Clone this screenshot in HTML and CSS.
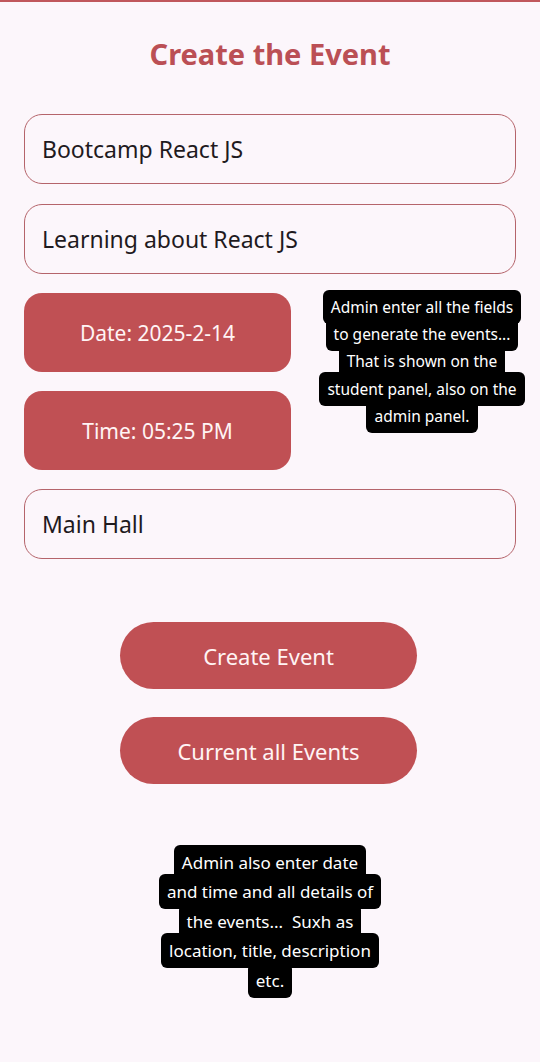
FILE: index.html
```html
<!DOCTYPE html>
<html>
<head>
<meta charset="utf-8">
<link rel="stylesheet" href="styles.css">
</head>
<body>
<div class="page">
  <h1 class="title">Create the Event</h1>
  <div class="field">Bootcamp React JS</div>
  <div class="field">Learning about React JS</div>
  <div class="picker">Date: 2025-2-14</div>
  <div class="picker">Time: 05:25 PM</div>
  <div class="field">Main Hall</div>
  <div class="actions">
    <div class="pill">Create Event</div>
    <div class="pill">Current all Events</div>
  </div>
  <div class="sticker sticker-top"><span>Admin enter all the fields<br>to generate the events...<br>That is shown on the<br>student panel, also on the<br>admin panel.</span></div>
  <div class="sticker sticker-bottom"><span>Admin also enter date<br>and time and all details of<br>the events...&nbsp; Suxh as<br>location, title, description<br>etc.</span></div>
</div>
</body>
</html>
```

FILE: styles.css
```css
* { box-sizing: border-box; }
html, body { margin: 0; padding: 0; }
body {
  background: #fcf6fb;
  font-family: "Noto Sans", "Open Sans", sans-serif;
  width: 540px;
  height: 1062px;
  overflow: hidden;
}
.page {
  position: relative;
  border-top: 2px solid #c0575c;
  padding: 0 24px 0 24px;
  height: 1062px;
}
.title {
  margin: 34px 0 0 0;
  height: 36px;
  line-height: 36px;
  font-size: 29px;
  font-weight: 700;
  color: #bb4f55;
  text-align: center;
}
.field {
  margin-top: 42px;
  height: 70px;
  border: 1.5px solid #b5646b;
  border-radius: 18px;
  display: flex;
  align-items: center;
  padding-left: 17px;
  font-size: 23px;
  color: #1f1a1e;
}
.field + .field { margin-top: 20px; }
.picker {
  margin-top: 19px;
  width: 267px;
  height: 79px;
  border-radius: 18px;
  background: #c05054;
  color: #fff4f4;
  font-size: 21px;
  display: flex;
  align-items: center;
  justify-content: center;
}
.picker + .field { margin-top: 19px; }
.actions {
  margin-top: 63px;
  display: flex;
  flex-direction: column;
  align-items: center;
  gap: 28px;
  padding-right: 3px;
}
.pill {
  width: 297px;
  height: 67px;
  border-radius: 34px;
  background: #c05054;
  color: #fff4f4;
  font-size: 22px;
  display: flex;
  align-items: center;
  justify-content: center;
}
.sticker {
  position: absolute;
  text-align: center;
  color: #ffffff;
  white-space: nowrap;
}
.sticker span {
  background: #000;
  border-radius: 6px;
  -webkit-box-decoration-break: clone;
  box-decoration-break: clone;
}
.sticker-top {
  left: 312px;
  top: 292px;
  width: 220px;
  font-size: 15.5px;
  line-height: 27.2px;
}
.sticker-top span { padding: 6px 8px; }
.sticker-bottom {
  left: 150px;
  top: 846px;
  width: 240px;
  font-size: 17px;
  line-height: 29.4px;
}
.sticker-bottom span { padding: 6px 8px; }
```
